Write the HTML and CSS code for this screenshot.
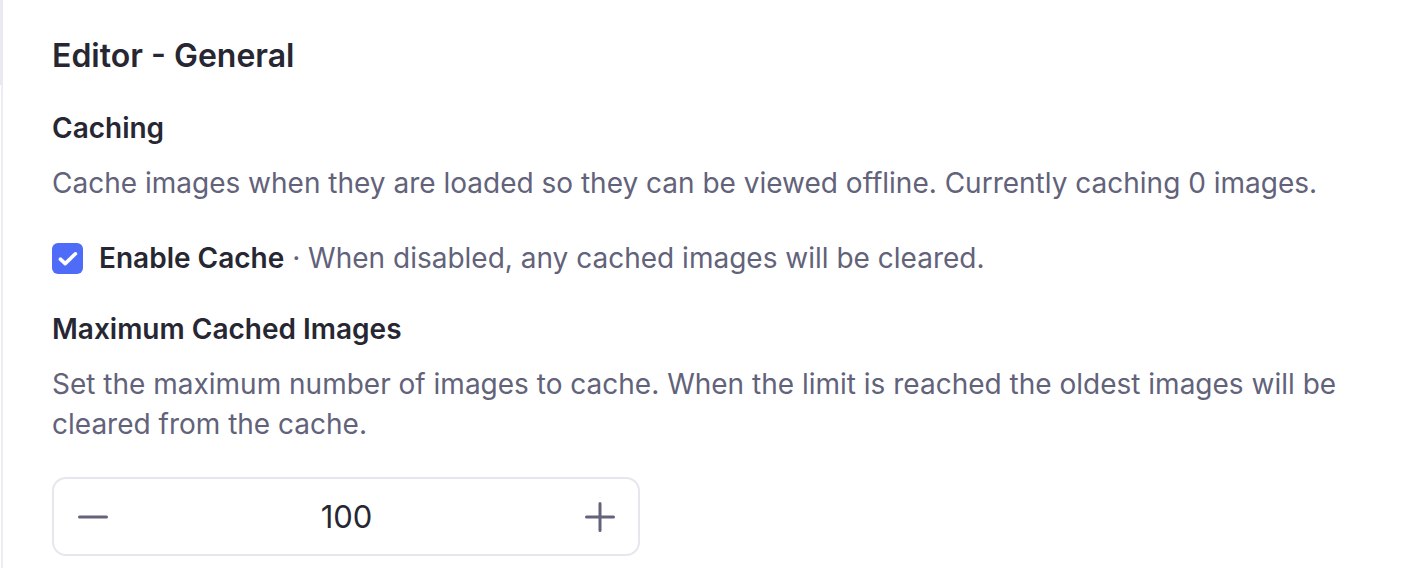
FILE: index.html
```html
<!DOCTYPE html>
<html lang="en">
<head>
<meta charset="utf-8">
<title>Editor - General</title>
<link rel="stylesheet" href="styles.css">
</head>
<body>
<div class="page">
  <div class="rail">
    <div class="rail-top"></div>
    <div class="rail-line"></div>
  </div>
  <main class="content">
    <h1 class="title">Editor - General</h1>

    <section class="group">
      <h2 class="label">Caching</h2>
      <p class="desc">Cache images when they are loaded so they can be viewed offline. Currently caching 0 images.</p>
    </section>

    <label class="check-row">
      <span class="checkbox">
        <svg viewBox="0 0 31 31" width="31" height="31" aria-hidden="true">
          <path d="M8.4 16.2 L13.2 20.6 L23.4 10.8" fill="none" stroke="#fff" stroke-width="3.6" stroke-linecap="round" stroke-linejoin="round"/>
        </svg>
      </span>
      <span class="check-text"><strong>Enable Cache</strong> · When disabled, any cached images will be cleared.</span>
    </label>

    <section class="group group-tight">
      <h2 class="label">Maximum Cached Images</h2>
      <p class="desc">Set the maximum number of images to cache. When the limit is reached the oldest images will be cleared from the cache.</p>
    </section>

    <div class="stepper">
      <button class="step-btn" type="button" aria-label="Decrease">
        <svg viewBox="0 0 30 30" width="30" height="30" aria-hidden="true">
          <path d="M1.5 15 H28.5" stroke="#63637b" stroke-width="3" stroke-linecap="round"/>
        </svg>
      </button>
      <span class="step-value">100</span>
      <button class="step-btn" type="button" aria-label="Increase">
        <svg viewBox="0 0 30 30" width="30" height="30" aria-hidden="true">
          <path d="M1.5 15 H28.5 M15 1.5 V28.5" stroke="#63637b" stroke-width="3" stroke-linecap="round"/>
        </svg>
      </button>
    </div>
  </main>
</div>
</body>
</html>
```

FILE: styles.css
```css
* { box-sizing: border-box; }

html, body {
  margin: 0;
  padding: 0;
  background: #ffffff;
}

body {
  font-family: Inter, "Noto Sans", "Liberation Sans", sans-serif;
  color: #272733;
}

.page {
  display: flex;
  min-height: 568px;
}

.rail {
  display: flex;
  flex-direction: column;
  width: 3px;
  flex: none;
}

.rail-top {
  height: 85px;
  width: 3px;
  background: #e9e9f2;
}

.rail-line {
  flex: 1;
  width: 2px;
  margin-left: 1px;
  background: #ececf3;
}

.content {
  flex: 1;
  padding: 36px 52px 0 49px;
  display: flex;
  flex-direction: column;
}

.title {
  margin: 0;
  font-size: 32px;
  line-height: 40px;
  font-weight: 600;
  color: #272733;
}

.group {
  margin-top: 32px;
}

.group-tight {
  margin-top: 31px;
}

.label {
  margin: 0;
  font-size: 28px;
  line-height: 40px;
  font-weight: 600;
  color: #272733;
}

.desc {
  margin: 15px 0 0;
  font-size: 28px;
  line-height: 40px;
  color: #62627a;
}

.check-row {
  margin-top: 35px;
  display: flex;
  align-items: center;
  gap: 16px;
  height: 40px;
}

.checkbox {
  width: 31px;
  height: 31px;
  border-radius: 6px;
  background: #4f6cf8;
  display: flex;
  flex: none;
}

.check-text {
  font-size: 28px;
  line-height: 40px;
  color: #62627a;
}

.check-text strong {
  font-weight: 600;
  color: #272733;
}

.stepper {
  margin-top: 33px;
  width: 588px;
  height: 79px;
  border: 2px solid #e6e6ef;
  border-radius: 14px;
  display: flex;
  align-items: center;
  justify-content: space-between;
  padding: 0 23px 0 24px;
}

.step-btn {
  border: 0;
  background: none;
  padding: 0;
  width: 30px;
  height: 30px;
  display: flex;
}

.step-value {
  font-size: 31px;
  color: #272733;
}
```
